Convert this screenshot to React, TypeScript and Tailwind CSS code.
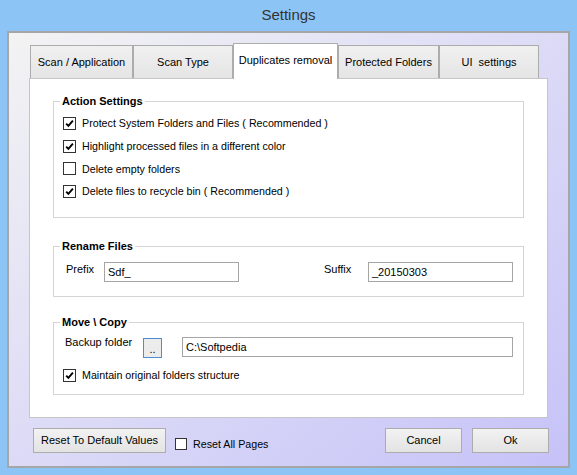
import React from 'react';

const tabs = [
  { label: 'Scan / Application', w: 'w-[103px]' },
  { label: 'Scan Type', w: 'w-[100px]' },
  { label: 'Duplicates removal', w: 'w-[105px]', active: true },
  { label: 'Protected Folders', w: 'w-[101px]' },
  { label: 'UI  settings', w: 'w-[100px]' },
];

const actions = [
  { label: 'Protect System Folders and Files ( Recommended )', checked: true },
  { label: 'Highlight processed files in a different color', checked: true },
  { label: 'Delete empty folders', checked: false },
  { label: 'Delete files to recycle bin ( Recommended )', checked: true },
];

const CheckBox = ({ checked, className = '' }: { checked: boolean; className?: string }) => (
  <span className={`flex h-[13px] w-[13px] shrink-0 items-center justify-center border border-[#333333] bg-white ${className}`}>
    {checked && (
      <svg viewBox="0 0 11 11" className="h-[11px] w-[11px]">
        <path d="M2.2 5.6 L4.4 7.9 L8.9 2.6" fill="none" stroke="#000" strokeWidth="1.9" />
      </svg>
    )}
  </span>
);

const Group = ({ title, className, children }: { title: string; className: string; children: React.ReactNode }) => (
  <fieldset className={`border border-[#d5d5d5] ${className}`}>
    <legend className="ml-[6px] px-[2px] text-[11px] font-bold leading-[13px] text-black">{title}</legend>
    {children}
  </fieldset>
);

const Button = ({ label, className }: { label: string; className: string }) => (
  <button className={`flex h-[25px] items-center justify-center border border-[#acacac] bg-linear-to-b from-[#f2f2f2] to-[#e3e3e3] text-[11px] text-black ${className}`}>
    {label}
  </button>
);

export default function App() {
  return (
    <div className="flex h-[475px] w-[577px] flex-col bg-[#8cc4f6] font-['Liberation_Sans',Arial,sans-serif] text-black">
      <div className="flex h-[31px] items-center justify-center text-[15px] text-[#333333]">Settings</div>

      <div className="mx-[7px] flex h-[437px] flex-col border-2 border-[#a6a6a6] bg-linear-to-br from-[#f3f3f3] to-[#c6c2f8] px-[20px] pt-[10px]">
        {/* tab strip */}
        <div className="flex h-[35px] items-end pl-px">
          {tabs.map((t) =>
            t.active ? (
              <div
                key={t.label}
                className={`relative z-10 -mb-px flex h-[36px] items-center justify-center border border-b-0 border-[#acacac] bg-white pb-[3px] text-[11px] ${t.w}`}
              >
                {t.label}
              </div>
            ) : (
              <div
                key={t.label}
                className={`flex h-[33px] items-center justify-center border border-b-0 border-[#acacac] bg-linear-to-b from-[#f0f0f0] to-[#e5e5e5] text-[11px] ${t.w}`}
              >
                <span className="whitespace-pre">{t.label}</span>
              </div>
            )
          )}
        </div>

        {/* tab page */}
        <div className="flex h-[340px] flex-col border border-[#c6c6c6] bg-white px-[23px]">
          <Group title="Action Settings" className="mt-[16px] h-[123px]">
            <div className="flex flex-col pl-[9px] pt-[4px]">
              {actions.map((a) => (
                <div key={a.label} className="flex h-[22.7px] items-center gap-[6px] text-[10.7px]">
                  <CheckBox checked={a.checked} />
                  <span>{a.label}</span>
                </div>
              ))}
            </div>
          </Group>

          <Group title="Rename Files" className="mt-[22px] h-[57px]">
            <div className="flex items-start pl-[12px] pt-[9px] text-[11px]">
              <span className="w-[38px] leading-[14px]">Prefix</span>
              <div className="flex h-[20px] w-[135px] items-center border border-[#a5a5a5] bg-white px-[3px]">Sdf_</div>
              <span className="ml-[85px] w-[44px] leading-[14px]">Suffix</span>
              <div className="flex h-[20px] w-[145px] items-center border border-[#a5a5a5] bg-white px-[3px]">_20150303</div>
            </div>
          </Group>

          <Group title="Move \ Copy" className="mt-[19px] h-[79px]">
            <div className="flex items-start pl-[11px] pt-[8px] text-[11px]">
              <span className="w-[78px] leading-[10px]">Backup folder</span>
              <button className="mt-px flex h-[20px] w-[19px] items-end justify-center border border-[#4a90d0] bg-[#ececec] pb-[2px] text-[11px] leading-[11px]">
                ..
              </button>
              <div className="ml-[20px] flex h-[20px] w-[331px] items-center border border-[#a5a5a5] bg-white px-[3px]">
                C:\Softpedia
              </div>
            </div>
            <div className="mt-[7px] flex h-[20px] items-center gap-[6px] pl-[9px] text-[10.7px]">
              <CheckBox checked />
              <span>Maintain original folders structure</span>
            </div>
          </Group>
        </div>

        {/* bottom buttons */}
        <div className="-mr-px mt-[10px] flex items-start pl-[4px]">
          <Button label="Reset To Default Values" className="w-[133px]" />
          <div className="ml-[9px] mt-[8px] flex items-center gap-[6px] text-[10.7px]">
            <span className="h-[12px] w-[12px] border border-[#333333] bg-white" />
            <span>Reset All Pages</span>
          </div>
          <div className="ml-auto flex gap-[10px]">
            <Button label="Cancel" className="w-[77px]" />
            <Button label="Ok" className="w-[77px]" />
          </div>
        </div>
      </div>
    </div>
  );
}
